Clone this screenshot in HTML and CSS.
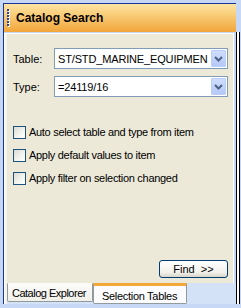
FILE: index.html
```html
<!DOCTYPE html>
<html lang="en">
<head>
    <meta charset="UTF-8">
    <title>Catalog Search</title>
    <link rel="stylesheet" href="styles.css">
</head>
<body>
    <div class="pane">
        <div class="header">
            <span class="grip"></span>
            <span class="title">Catalog Search</span>
        </div>
        <div class="panel">
            <div class="fields">
                <span class="field-label">Table:</span>
                <div class="combo">
                    <span class="combo-text">ST/STD_MARINE_EQUIPMEN</span>
                    <span class="combo-btn"><svg width="15" height="17" viewBox="0 0 15 17"><path d="M4 7 L7.5 10.5 L11 7" fill="none" stroke="#4d6185" stroke-width="2"/></svg></span>
                </div>
                <span class="field-label">Type:</span>
                <div class="combo">
                    <span class="combo-text">=24119/16</span>
                    <span class="combo-btn"><svg width="15" height="17" viewBox="0 0 15 17"><path d="M4 7 L7.5 10.5 L11 7" fill="none" stroke="#4d6185" stroke-width="2"/></svg></span>
                </div>
            </div>
            <div class="checks">
                <label class="check"><span class="box"></span>Auto select table and type from item</label>
                <label class="check"><span class="box"></span>Apply default values to item</label>
                <label class="check"><span class="box"></span>Apply filter on selection changed</label>
            </div>
            <div class="actions">
                <button class="find">Find&nbsp;&nbsp;&gt;&gt;</button>
            </div>
        </div>
        <div class="tabs">
            <div class="tab">Catalog Explorer</div>
            <div class="tab active">Selection Tables</div>
        </div>
    </div>
    <div class="split"></div>
</body>
</html>
```

FILE: styles.css
```css
*{
    margin: 0;
    padding: 0;
    box-sizing: border-box;
}
body{
    width: 241px;
    height: 308px;
    overflow: hidden;
    display: flex;
    align-items: flex-start;
    padding: 3px 0 0 3px;
    background: #c6d8f6;
    font-family: "Liberation Sans", Arial, sans-serif;
    font-size: 11px;
    color: #000;
}
.pane{
    width: 233px;
    height: 301px;
    flex-shrink: 0;
    border-left: 1px solid #1a3596;
    border-top: 1px solid #1a3596;
    display: flex;
    flex-direction: column;
    background: #c6d8f6;
}
.header{
    height: 28px;
    flex-shrink: 0;
    display: flex;
    align-items: center;
    background: linear-gradient(#fde4a4, #f9cf7c 35%, #f2a53a);
}
.grip{
    width: 3px;
    height: 18px;
    margin-left: 3px;
    background-image:
        repeating-linear-gradient(#2a45a3 0 2px, transparent 2px 3px),
        repeating-linear-gradient(#fff 0 2px, transparent 2px 3px);
    background-size: 2px 17px, 2px 17px;
    background-position: 0 0, 1px 1px;
    background-repeat: no-repeat;
}
.title{
    margin-left: 6px;
    font-weight: bold;
    font-size: 12px;
}
.panel{
    width: 230px;
    height: 250px;
    flex-shrink: 0;
    margin-top: 1px;
    background: #ece9d8;
    border: 1px solid #fff;
    border-bottom: none;
    box-shadow: inset 2px 0 #f6f5f0;
    display: flex;
    flex-direction: column;
    padding: 14px 5px 5px 8px;
}
.fields{
    display: grid;
    grid-template-columns: 41px 174px;
    row-gap: 7px;
    align-items: center;
}
.field-label{
    padding-top: 1px;
}
.combo{
    height: 21px;
    border: 1px solid #7f9db9;
    background: #fff;
    display: flex;
    align-items: center;
}
.combo-text{
    flex: 1;
    min-width: 0;
    padding-left: 3px;
    white-space: nowrap;
    overflow: hidden;
    letter-spacing: -0.15px;
}
.combo-btn{
    flex-shrink: 0;
    width: 15px;
    height: 17px;
    margin: 0 1px 0 2px;
    border: 1px solid #bccdf7;
    border-radius: 1px;
    background: linear-gradient(#cfdcfd, #b5c9f7);
    display: flex;
}
.combo-btn svg{
    margin: -1px;
}
.checks{
    display: flex;
    flex-direction: column;
    gap: 10px;
    margin-top: 29px;
}
.check{
    display: flex;
    align-items: center;
    height: 13px;
    line-height: 13px;
    letter-spacing: -0.3px;
    white-space: nowrap;
}
.box{
    flex-shrink: 0;
    width: 13px;
    height: 13px;
    margin-right: 3px;
    border: 1px solid #1c5180;
    background: linear-gradient(135deg, #dcdcd4, #f4f4f0 60%, #fff);
}
.actions{
    margin-top: auto;
    display: flex;
    justify-content: flex-end;
}
.find{
    width: 69px;
    height: 18px;
    border: 1px solid #003c74;
    border-radius: 3px;
    background: linear-gradient(#fff, #f2f1ec 70%, #d9d4c8);
    font-family: "Liberation Sans", Arial, sans-serif;
    font-size: 11px;
    color: #000;
}
.tabs{
    height: 21px;
    flex-shrink: 0;
    display: flex;
    align-items: flex-start;
    padding-left: 3px;
    background: #d4e2f8;
    box-shadow: inset 1px 0 #fff, inset 3px 0 #f4f3ee;
}
.tab{
    flex-shrink: 0;
    height: 19px;
    width: 86px;
    padding: 3px 0 0 4px;
    border: 1px solid #919b9c;
    border-top: 1px solid #fbfbf9;
    border-radius: 0 0 2px 2px;
    background: linear-gradient(#fbfbfa, #f0efe9);
    white-space: nowrap;
    letter-spacing: -0.5px;
}
.tab.active{
    width: 94px;
    height: 21px;
    padding: 4px 0 0 8px;
    border-top: 3px solid #f3a93a;
    background: #fcfcfe;
    letter-spacing: -0.3px;
}
.split{
    flex-shrink: 0;
    width: 4px;
    height: 272px;
    margin-top: 29px;
    border-left: 1px solid #000;
    border-right: 1px solid #000;
    background: #fff;
}
```
